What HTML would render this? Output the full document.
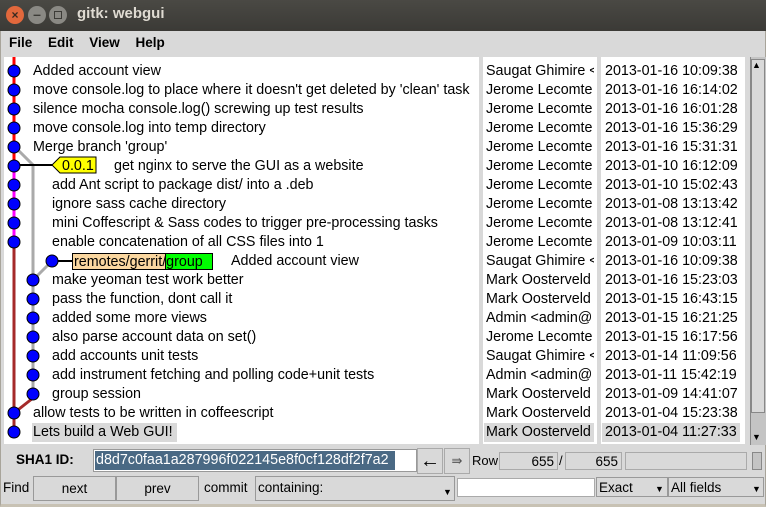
<!DOCTYPE html><html><head><style>
*{margin:0;padding:0;box-sizing:border-box}
body{width:766px;height:507px;overflow:hidden;background:#d9d9d9;font-family:"Liberation Sans",sans-serif;font-size:14.3px;position:relative;color:#000}
.a{position:absolute;white-space:nowrap}
.t{position:absolute;white-space:nowrap;line-height:19px;height:19px}
</style></head><body>
<div class="a" style="left:0;top:0;width:766px;height:31px;background:linear-gradient(#4a4944,#3b3a36);"></div>
<div class="a" style="left:6px;top:6px;width:18px;height:18px;border-radius:50%;background:#e2683c;color:#3a2a20;font-size:12px;text-align:center;line-height:18px;font-weight:bold">×</div>
<div class="a" style="left:28px;top:6px;width:18px;height:18px;border-radius:50%;background:#8a8984;color:#3c3b37;font-size:14px;text-align:center;line-height:16px;font-weight:bold">–</div>
<div class="a" style="left:49px;top:6px;width:18px;height:18px;border-radius:50%;background:#8a8984"><div style="margin:5px;width:8px;height:8px;border:1.5px solid #3c3b37"></div></div>
<div class="a" style="left:77px;top:5px;color:#dfdbd2;font-size:15px;font-weight:bold">gitk: webgui</div>
<div class="a" style="left:0;top:31px;width:766px;height:476px;background:#d9d9d9;border-left:1px solid #a8a49a;border-right:1px solid #a8a49a;border-bottom:3px solid #c8c2b4"></div>
<div class="a" style="left:9px;top:34px;font-weight:bold;font-size:13.5px;line-height:18px;word-spacing:12px">File Edit View Help</div>
<div class="a" style="left:4px;top:57px;width:475px;height:387px;background:#fff"></div>
<div class="a" style="left:483px;top:57px;width:114px;height:387px;background:#fff"></div>
<div class="a" style="left:601px;top:57px;width:144px;height:387px;background:#fff"></div>
<div class="a" style="left:750px;top:57px;width:16px;height:388px;background:#c4c4c4;border-left:1px solid #888"></div>
<div class="a" style="left:751px;top:59px;width:14px;height:354px;background:#d9d9d9;border:1px solid #888"></div>
<div class="a" style="left:752px;top:60px;font-size:9px">▲</div>
<div class="a" style="left:752px;top:432px;font-size:9px">▼</div>
<div class="a" style="left:32px;top:423px;width:145px;height:19px;background:#d9d9d9"></div>
<div class="a" style="left:484px;top:423px;width:110px;height:19px;background:#d9d9d9"></div>
<div class="a" style="left:602px;top:423px;width:138px;height:19px;background:#d9d9d9"></div>
<svg class="a" style="left:0;top:57px" width="240" height="387" viewBox="0 57 240 387">
<line x1="14" y1="57" x2="14" y2="165" stroke="#f00" stroke-width="3"/>
<line x1="14" y1="165" x2="14" y2="241" stroke="#f0f" stroke-width="3"/>
<line x1="14" y1="241" x2="14" y2="432" stroke="#a52a2a" stroke-width="3"/>
<polyline points="14,146 33,165 33,394" fill="none" stroke="#aaa" stroke-width="3"/>
<polyline points="33,280 52,261" fill="none" stroke="#aaa" stroke-width="3"/>
<polyline points="14,413 33,398" fill="none" stroke="#a52a2a" stroke-width="3"/>
<line x1="14" y1="165" x2="58" y2="165" stroke="#000" stroke-width="2"/>
<line x1="52" y1="261" x2="72" y2="261" stroke="#000" stroke-width="2"/>
<polygon points="52,165 60,157 96,157 96,173 60,173" fill="#ff0" stroke="#000"/>
<text x="62" y="170" font-family="Liberation Sans" font-size="14.3">0.0.1</text>
<rect x="72.5" y="253.5" width="93" height="16" fill="#fad7a0" stroke="#000"/>
<rect x="165.5" y="253.5" width="47" height="16" fill="#0f0" stroke="#000"/>
<text x="74" y="266" font-family="Liberation Sans" font-size="14.3">remotes/gerrit/group</text>
<g fill="#00f" stroke="#000">
<circle cx="14" cy="71" r="6"/><circle cx="14" cy="90" r="6"/><circle cx="14" cy="109" r="6"/><circle cx="14" cy="128" r="6"/><circle cx="14" cy="147" r="6"/><circle cx="14" cy="166" r="6"/><circle cx="14" cy="185" r="6"/><circle cx="14" cy="204" r="6"/><circle cx="14" cy="223" r="6"/><circle cx="14" cy="242" r="6"/><circle cx="52" cy="261" r="6"/><circle cx="33" cy="280" r="6"/><circle cx="33" cy="299" r="6"/><circle cx="33" cy="318" r="6"/><circle cx="33" cy="337" r="6"/><circle cx="33" cy="356" r="6"/><circle cx="33" cy="375" r="6"/><circle cx="33" cy="394" r="6"/><circle cx="14" cy="413" r="6"/><circle cx="14" cy="432" r="6"/>
</g></svg>
<div class="t" style="left:33px;top:62px">Added account view</div>
<div class="t" style="left:33px;top:81px">move console.log to place where it doesn't get deleted by 'clean' task</div>
<div class="t" style="left:33px;top:100px">silence mocha console.log() screwing up test results</div>
<div class="t" style="left:33px;top:119px">move console.log into temp directory</div>
<div class="t" style="left:33px;top:138px">Merge branch 'group'</div>
<div class="t" style="left:114px;top:157px">get nginx to serve the GUI as a website</div>
<div class="t" style="left:52px;top:176px">add Ant script to package dist/ into a .deb</div>
<div class="t" style="left:52px;top:195px">ignore sass cache directory</div>
<div class="t" style="left:52px;top:214px">mini Coffescript &amp; Sass codes to trigger pre-processing tasks</div>
<div class="t" style="left:52px;top:233px">enable concatenation of all CSS files into 1</div>
<div class="t" style="left:231px;top:252px">Added account view</div>
<div class="t" style="left:52px;top:271px">make yeoman test work better</div>
<div class="t" style="left:52px;top:290px">pass the function, dont call it</div>
<div class="t" style="left:52px;top:309px">added some more views</div>
<div class="t" style="left:52px;top:328px">also parse account data on set()</div>
<div class="t" style="left:52px;top:347px">add accounts unit tests</div>
<div class="t" style="left:52px;top:366px">add instrument fetching and polling code+unit tests</div>
<div class="t" style="left:52px;top:385px">group session</div>
<div class="t" style="left:33px;top:404px">allow tests to be written in coffeescript</div>
<div class="t" style="left:33px;top:423px">Lets build a Web GUI!</div>
<div class="a" style="left:486px;top:62px;width:108px;overflow:hidden;line-height:19px">Saugat Ghimire &lt;<br>Jerome Lecomte<br>Jerome Lecomte<br>Jerome Lecomte<br>Jerome Lecomte<br>Jerome Lecomte<br>Jerome Lecomte<br>Jerome Lecomte<br>Jerome Lecomte<br>Jerome Lecomte<br>Saugat Ghimire &lt;<br>Mark Oosterveld<br>Mark Oosterveld<br>Admin &lt;admin@<br>Jerome Lecomte<br>Saugat Ghimire &lt;<br>Admin &lt;admin@<br>Mark Oosterveld<br>Mark Oosterveld<br>Mark Oosterveld</div>
<div class="a" style="left:605px;top:62px;line-height:19px">2013-01-16 10:09:38<br>2013-01-16 16:14:02<br>2013-01-16 16:01:28<br>2013-01-16 15:36:29<br>2013-01-16 15:31:31<br>2013-01-10 16:12:09<br>2013-01-10 15:02:43<br>2013-01-08 13:13:42<br>2013-01-08 13:12:41<br>2013-01-09 10:03:11<br>2013-01-16 10:09:38<br>2013-01-16 15:23:03<br>2013-01-15 16:43:15<br>2013-01-15 16:21:25<br>2013-01-15 16:17:56<br>2013-01-14 11:09:56<br>2013-01-11 15:42:19<br>2013-01-09 14:41:07<br>2013-01-04 15:23:38<br>2013-01-04 11:27:33</div>
<div class="a" style="left:16px;top:452px;font-weight:bold;font-size:13.5px">SHA1 ID:</div>
<div class="a" style="left:93px;top:449px;width:324px;height:23px;background:#fff;border:1px solid #999"></div>
<div class="a" style="left:95px;top:451px;width:300px;height:19px;background:#4a6984;color:#fff;line-height:19px;padding-left:1px">d8d7c0faa1a287996f022145e8f0cf128df2f7a2</div>
<div class="a" style="left:417px;top:448px;width:26px;height:26px;border:1px solid #aaa;background:#d9d9d9;font-size:20px;text-align:center;line-height:24px;font-weight:bold">←</div>
<div class="a" style="left:444px;top:448px;width:26px;height:26px;border:1px solid #aaa;background:#d9d9d9;font-size:13px;text-align:center;line-height:24px;color:#555">⇛</div>
<div class="a" style="left:472px;top:453px;font-size:13px">Row</div>
<div class="a" style="left:499px;top:452px;width:59px;height:18px;border:1px solid #aaa;text-align:right;padding-right:3px;font-size:13.5px;line-height:17px">655</div>
<div class="a" style="left:559px;top:453px;font-size:13px">/</div>
<div class="a" style="left:565px;top:452px;width:57px;height:18px;border:1px solid #aaa;text-align:right;padding-right:3px;font-size:13.5px;line-height:17px">655</div>
<div class="a" style="left:625px;top:452px;width:122px;height:18px;border:1px solid #aaa"></div>
<div class="a" style="left:752px;top:452px;width:10px;height:18px;border:1px solid #888;background:#c4c4c4"></div>
<div class="a" style="left:3px;top:480px;font-size:13.5px">Find</div>
<div class="a" style="left:33px;top:476px;width:83px;height:25px;border:1px solid #999;text-align:center;line-height:23px;font-size:13.5px">next</div>
<div class="a" style="left:116px;top:476px;width:83px;height:25px;border:1px solid #999;text-align:center;line-height:23px;font-size:13.5px">prev</div>
<div class="a" style="left:204px;top:480px;font-size:13.5px">commit</div>
<div class="a" style="left:255px;top:476px;width:200px;height:25px;border:1px solid #999;font-size:13.5px;line-height:22px;padding-left:2px">containing:</div>
<div class="a" style="left:443px;top:487px;font-size:9px">▼</div>
<div class="a" style="left:457px;top:478px;width:138px;height:19px;background:#fff;border:1px solid #aaa"></div>
<div class="a" style="left:596px;top:477px;width:72px;height:20px;border:1px solid #999;font-size:13.5px;line-height:19px;padding-left:2px">Exact</div>
<div class="a" style="left:655px;top:484px;font-size:9px">▼</div>
<div class="a" style="left:668px;top:477px;width:96px;height:20px;border:1px solid #999;font-size:13.5px;line-height:19px;padding-left:2px">All fields</div>
<div class="a" style="left:752px;top:484px;font-size:9px">▼</div>
</body></html>
